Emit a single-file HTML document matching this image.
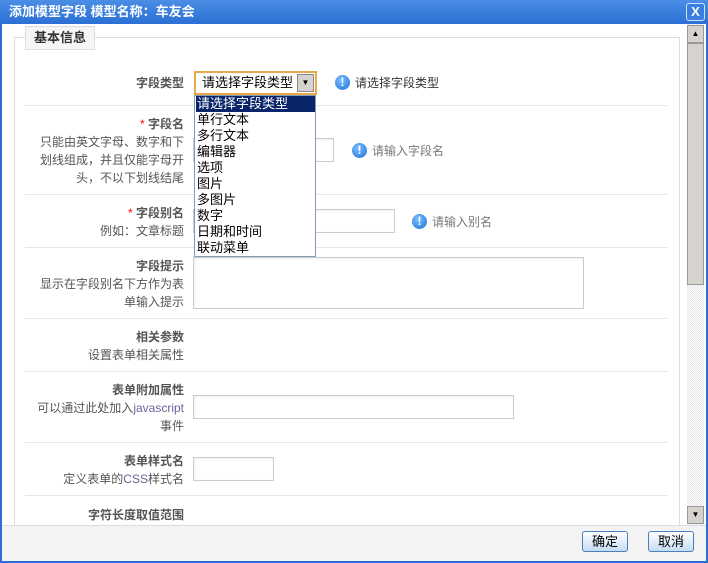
<!DOCTYPE html>
<html><head><meta charset="utf-8"><style>
*{margin:0;padding:0;box-sizing:border-box}
body{width:708px;height:563px;overflow:hidden;background:#fff;font:12px/18px "Liberation Sans","Noto Sans CJK SC",sans-serif;color:#555;position:relative}
.a{position:absolute}
.title{left:0;top:0;width:708px;height:24px;background:linear-gradient(#4a8ee6,#2b6fd4);color:#fff;font-weight:bold;font-size:13px;line-height:24px;padding-left:9px}
.frame{left:0;top:24px;width:708px;height:539px;border:2px solid #2b6fd4;border-top:0;background:#fff}
.foot{left:2px;top:525px;width:704px;height:36px;background:#f3f3f3;border-top:1px solid #ddd}
.lab{right:524px;text-align:right;white-space:nowrap}
.lab b{color:#555}
.sep{left:25px;width:643px;height:1px;background:#e6e6e6}
.inp{border:1px solid #ccc;background:#fff;box-shadow:inset 1px 1px 2px #eee}
.ic{width:15px;height:15px;border-radius:50%;background:radial-gradient(circle at 40% 35%,#7cc0ff,#1a6fd8);color:#fff;font-weight:bold;font-size:12px;line-height:15px;text-align:center}
.tip{color:#777}
.btn{width:46px;height:21px;border:1px solid #4d7fb8;border-radius:3px;background:linear-gradient(#fff,#c5dcf5);color:#000;text-align:center;line-height:19px;font-size:13px}
.red{color:#f00}
</style></head><body>
<div class="a title">添加模型字段 模型名称：车友会</div>
<div class="a" style="left:686px;top:3px;width:19px;height:18px;border:1px solid #cfe0f8;border-radius:3px;background:#3a7fe0;color:#fff;font-weight:bold;text-align:center;line-height:16px;font-size:13px">X</div>
<div class="a frame"></div>
<div class="a" style="left:14px;top:37px;width:666px;height:500px;border:1px solid #ddd;border-bottom:0"></div>
<div class="a" style="left:25px;top:26px;width:70px;height:24px;border:1px solid #ddd;background:#f5f5f5;font-weight:bold;color:#333;text-align:center;line-height:22px;font-size:13px">基本信息</div>

<div class="a lab" style="top:74px"><b>字段类型</b></div>
<div class="a sep" style="top:105px"></div>
<div class="a lab" style="top:115px;line-height:18px"><span class="red">* </span><b>字段名</b><br>只能由英文字母、数字和下<br>划线组成，并且仅能字母开<br>头，不以下划线结尾</div>
<div class="a sep" style="top:194px"></div>
<div class="a lab" style="top:204px"><span class="red">* </span><b>字段别名</b><br>例如：文章标题</div>
<div class="a sep" style="top:247px"></div>
<div class="a lab" style="top:257px"><b>字段提示</b><br>显示在字段别名下方作为表<br>单输入提示</div>
<div class="a sep" style="top:318px"></div>
<div class="a lab" style="top:328px"><b>相关参数</b><br>设置表单相关属性</div>
<div class="a sep" style="top:371px"></div>
<div class="a lab" style="top:381px"><b>表单附加属性</b><br>可以通过此处加入<span style="color:#669">javascript</span><br>事件</div>
<div class="a sep" style="top:442px"></div>
<div class="a lab" style="top:452px"><b>表单样式名</b><br>定义表单的<span style="color:#669">CSS</span>样式名</div>
<div class="a sep" style="top:495px"></div>
<div class="a lab" style="top:506px"><b>字符长度取值范围</b></div>

<div class="a inp" style="left:193px;top:138px;width:141px;height:24px"></div>
<div class="a ic" style="left:352px;top:143px">!</div><div class="a tip" style="left:372px;top:142px">请输入字段名</div>
<div class="a inp" style="left:193px;top:209px;width:202px;height:24px"></div>
<div class="a ic" style="left:412px;top:214px">!</div><div class="a tip" style="left:432px;top:213px">请输入别名</div>
<div class="a inp" style="left:193px;top:257px;width:391px;height:52px"></div>
<div class="a inp" style="left:193px;top:395px;width:321px;height:24px"></div>
<div class="a inp" style="left:193px;top:457px;width:81px;height:24px"></div>

<div class="a" style="left:194px;top:71px;width:123px;height:24px;border:2px solid #e8a94a;background:#fff;color:#000;padding-left:6px;line-height:20px;font-size:13px">请选择字段类型</div>
<div class="a" style="left:297px;top:74px;width:17px;height:18px;background:#d6d3ce;border:1px solid #888;text-align:center;font-size:8px;line-height:16px;color:#000">▼</div>
<div class="a ic" style="left:335px;top:75px">!</div><div class="a" style="left:355px;top:74px;color:#333">请选择字段类型</div>

<div class="a" style="left:194px;top:95px;width:122px;height:162px;border:1px solid #7f9db9;background:#fff;color:#000;line-height:16px;padding:0 0 0 2px;font-size:13px">
<div style="background:#0a246a;color:#fff;margin-left:-1px;padding-left:1px">请选择字段类型</div>
<div>单行文本</div><div>多行文本</div><div>编辑器</div><div>选项</div><div>图片</div><div>多图片</div><div>数字</div><div>日期和时间</div><div>联动菜单</div></div>

<div class="a" style="left:687px;top:24px;width:17px;height:501px;background:repeating-conic-gradient(#e4e4e4 0 25%,#fff 0 50%) 0 0/2px 2px"></div>
<div class="a" style="left:687px;top:25px;width:17px;height:18px;background:#d6d3ce;border:1px solid #999;font-size:8px;text-align:center;line-height:16px;color:#000">▲</div>
<div class="a" style="left:687px;top:43px;width:17px;height:242px;background:#d6d3ce;border:1px solid #999"></div>
<div class="a" style="left:687px;top:506px;width:17px;height:18px;background:#d6d3ce;border:1px solid #999;font-size:8px;text-align:center;line-height:16px;color:#000">▼</div>

<div class="a foot"></div>
<div class="a btn" style="left:582px;top:531px">确定</div>
<div class="a btn" style="left:648px;top:531px">取消</div>
</body></html>
